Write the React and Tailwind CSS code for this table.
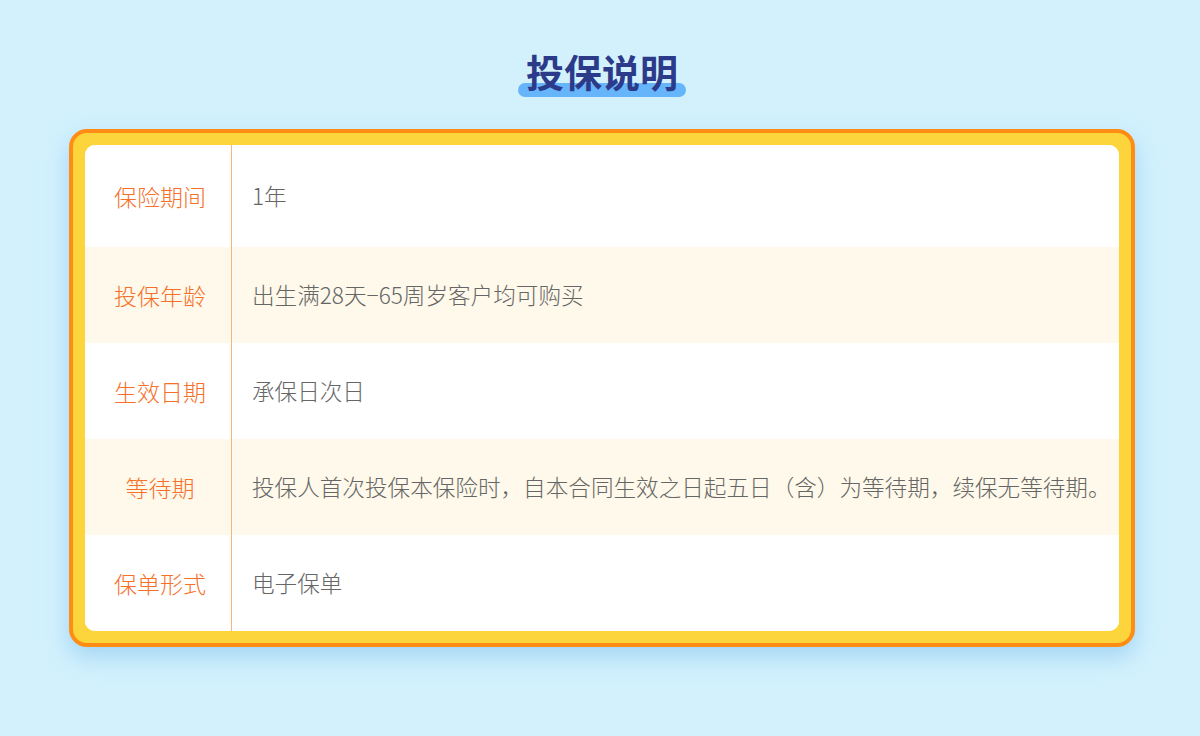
import React from 'react';

const rows = [
  { label: '保险期间', value: '1年', h: 'h-[102px]' },
  { label: '投保年龄', value: '出生满28天−65周岁客户均可购买', h: 'h-[96px]' },
  { label: '生效日期', value: '承保日次日', h: 'h-[96px]' },
  { label: '等待期', value: '投保人首次投保本保险时，自本合同生效之日起五日（含）为等待期，续保无等待期。', h: 'h-[96px]' },
  { label: '保单形式', value: '电子保单', h: 'h-[96px]' },
];

const App = () => {
  return (
    <div
      className="w-full h-[736px] bg-[#d2f1fd] flex flex-col items-center pl-[4px]"
      style={{ fontFamily: '"Noto Sans CJK SC", "Noto Sans", sans-serif' }}
    >
      <div className="relative mt-[47px] h-[48px]">
        <div className="absolute left-[-8px] right-[-8px] bottom-[-2px] h-[14px] rounded-full bg-[#66b5fb]" />
        <h1 className="relative text-[38px] leading-[48px] font-bold text-[#2c3a8a]">投保说明</h1>
      </div>

      <div className="mt-[34px] w-[1066px] h-[518px] rounded-[18px] border-4 border-[#ff8c14] bg-[#fcd43b] p-3 shadow-[0_10px_22px_rgba(110,180,235,0.45)]">
        <div className="h-full rounded-[10px] bg-white overflow-hidden">
          {rows.map((row, i) => (
            <div
              key={row.label}
              className={`flex ${row.h} ${i % 2 === 1 ? 'bg-[#fef9ea]' : 'bg-white'}`}
            >
              <div className="w-[147px] shrink-0 flex items-center justify-center pl-1 border-r border-[#f7b57a] text-[23px] font-light text-[#f7702a]">
                {row.label}
              </div>
              <div className="flex items-center pl-5 text-[22.6px] font-light text-[#666666] whitespace-nowrap">
                {row.value}
              </div>
            </div>
          ))}
        </div>
      </div>
    </div>
  );
};

export default App;
